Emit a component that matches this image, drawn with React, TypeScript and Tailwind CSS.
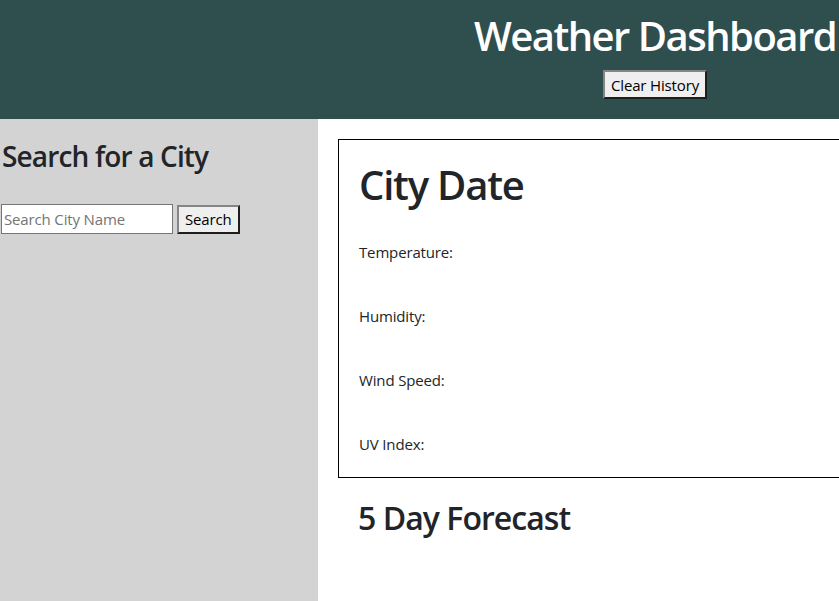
export default function App() {
  return (
    <div className="h-[601px] w-[839px] overflow-hidden bg-white font-['Open_Sans',sans-serif] text-[#212529]">
      <header className="flex h-[119px] bg-[#2f4f4f] pt-3">
        <div className="w-[472px] shrink-0" />
        <div className="flex w-[366px] shrink-0 flex-col items-center">
          <h1 className="mb-[10px] whitespace-nowrap text-[40px] font-semibold leading-[48px] tracking-[-0.038em] text-white">
            Weather Dashboard
          </h1>
          <button className="h-[29px] border-2 border-b-[#1e1e1e] border-l-[#858585] border-r-[#1e1e1e] border-t-[#858585] bg-[#efefef] px-[6px] text-[15px] leading-5 tracking-[-0.01em] text-black">
            Clear History
          </button>
        </div>
      </header>

      <div className="flex h-[482px]">
        <aside className="w-[318px] shrink-0 bg-[#d3d3d3] pt-5">
          <h3 className="whitespace-nowrap pl-[2px] text-[28px] font-semibold leading-[34px] tracking-[-0.03em]">
            Search for a City
          </h3>
          <form className="mt-[31px] flex items-center gap-1 pl-px">
            <input
              type="text"
              placeholder="Search City Name"
              className="h-[30px] w-[172px] border border-[#767676] bg-white px-[2px] text-[15px] tracking-[-0.01em] text-black placeholder:text-[#757575]"
            />
            <button
              type="button"
              className="h-[29px] border-2 border-b-[#1e1e1e] border-l-[#858585] border-r-[#1e1e1e] border-t-[#858585] bg-[#efefef] px-[6px] text-[15px] leading-5 tracking-[-0.01em] text-black"
            >
              Search
            </button>
          </form>
        </aside>

        <main className="min-w-0 flex-1 pl-5 pt-5">
          <section className="w-[600px] border border-black px-5 pb-[21px] pt-[21px]">
            <h1 className="text-[40px] font-semibold leading-[48px] tracking-[-0.03em]">City Date</h1>
            <div className="mt-[31px] flex flex-col gap-10 text-[15px] leading-6 tracking-[-0.01em]">
              <p>Temperature:</p>
              <p>Humidity:</p>
              <p>Wind Speed:</p>
              <p>UV Index:</p>
            </div>
          </section>
          <h2 className="mt-[21px] pl-5 text-[32px] font-semibold leading-[38px] tracking-[-0.03em]">
            5 Day Forecast
          </h2>
        </main>
      </div>
    </div>
  );
}
